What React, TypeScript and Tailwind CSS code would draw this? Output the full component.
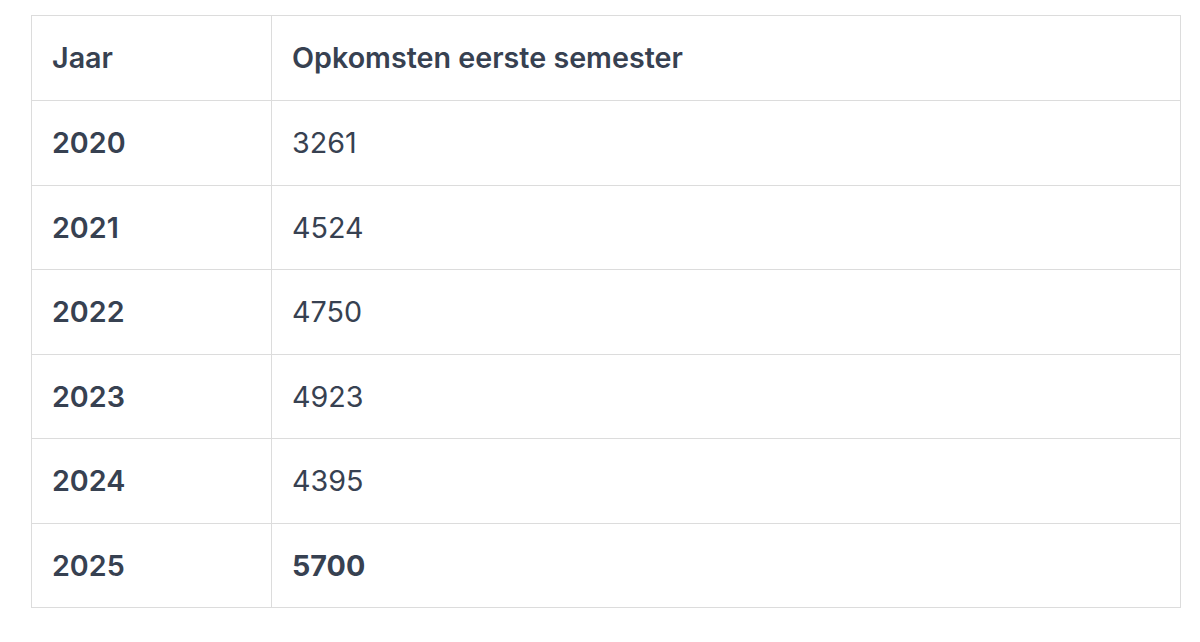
import React from "react";

const rows: { year: string; value: string; bold?: boolean }[] = [
  { year: "2020", value: "3261" },
  { year: "2021", value: "4524" },
  { year: "2022", value: "4750" },
  { year: "2023", value: "4923" },
  { year: "2024", value: "4395" },
  { year: "2025", value: "5700", bold: true },
];

export default function App() {
  return (
    <div
      className="w-[1200px] h-[642px] bg-white pt-[15px] pl-[31px]"
      style={{ fontFamily: "Inter, 'Noto Sans', sans-serif" }}
    >
      <table className="w-[1150px] border-collapse text-[#374151] text-[28.7px]">
        <thead>
          <tr>
            <th className="h-[85px] w-[240px] border border-[#dcdcdc] pl-[20px] text-left font-semibold">
              Jaar
            </th>
            <th className="h-[85px] border border-[#dcdcdc] pl-[20px] text-left font-semibold">
              Opkomsten eerste semester
            </th>
          </tr>
        </thead>
        <tbody>
          {rows.map((r) => (
            <tr key={r.year}>
              <td className="h-[84.5px] border border-[#dcdcdc] pl-[20px] font-semibold">
                {r.year}
              </td>
              <td
                className={
                  "h-[84.5px] border border-[#dcdcdc] pl-[20px] " +
                  (r.bold ? "font-bold" : "font-normal")
                }
              >
                {r.value}
              </td>
            </tr>
          ))}
        </tbody>
      </table>
    </div>
  );
}
